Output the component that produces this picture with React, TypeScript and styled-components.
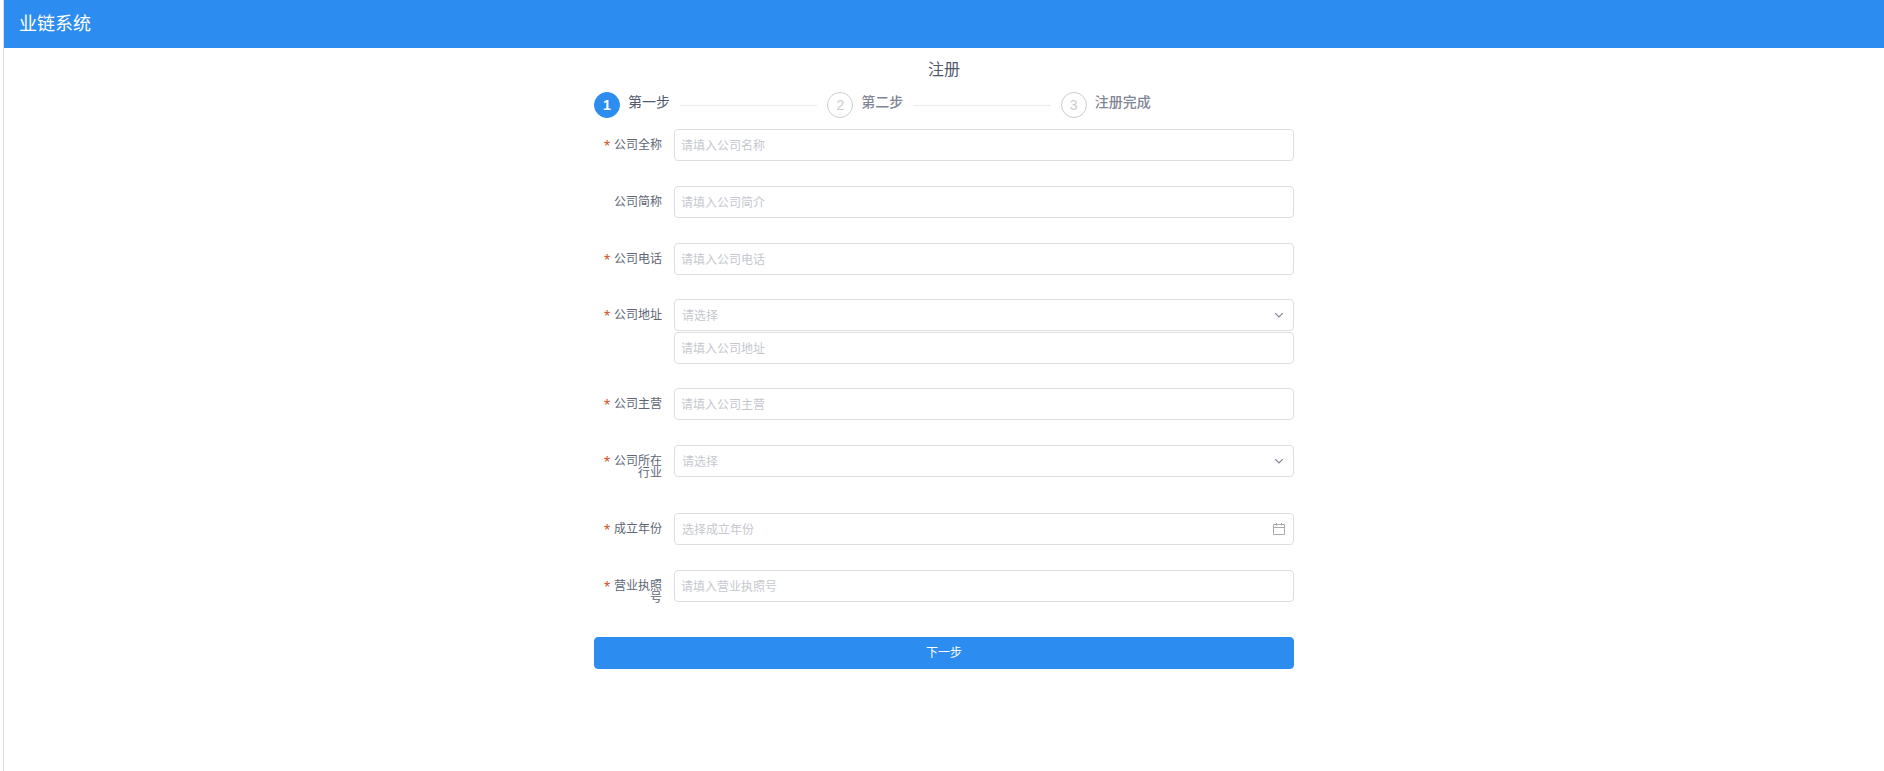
import React from "react";
import styled, { createGlobalStyle } from "styled-components";

const Global = createGlobalStyle`
  html, body { margin: 0; padding: 0; background: #fff; }
  body { font-family: "Noto Sans CJK SC", "Liberation Sans", sans-serif; color: #515a6e; font-size: 12px; }
  * { box-sizing: border-box; }
`;

const Page = styled.div`
  margin-left: 3px;
  border-left: 1px solid #dcdee2;
  height: 771px;
  overflow: hidden;
`;

const Header = styled.header`
  height: 48px;
  background: #2d8cf0;
  color: #fff;
  font-size: 18px;
  line-height: 44px;
  padding-left: 15px;
`;

const Main = styled.main`
  width: 700px;
  margin: 0 0 0 590px;
`;

const Title = styled.h1`
  margin: 0;
  height: 44px;
  font-size: 16px;
  font-weight: 400;
  line-height: 40px;
  text-align: center;
  color: #515a6e;
`;

const Steps = styled.ol`
  display: flex;
  list-style: none;
  margin: 0 0 11px;
  padding: 0;
  height: 26px;
`;

const Step = styled.li`
  flex: 1;
  display: flex;
  align-items: center;
  min-width: 0;
`;

const Circle = styled.span<{ $active?: boolean }>`
  flex: none;
  width: 26px;
  height: 26px;
  border-radius: 50%;
  border: 1px solid ${(p) => (p.$active ? "#2d8cf0" : "#ccc")};
  background: ${(p) => (p.$active ? "#2d8cf0" : "#fff")};
  color: ${(p) => (p.$active ? "#fff" : "#ccc")};
  font-family: "Liberation Sans", sans-serif;
  font-size: 14px;
  font-weight: ${(p) => (p.$active ? 700 : 400)};
  line-height: 25px;
  text-align: center;
`;

const StepLabel = styled.span<{ $active?: boolean }>`
  flex: none;
  margin: -8px 0 0 8px;
  font-size: 14px;
  line-height: 20px;
  font-weight: ${(p) => (p.$active ? 400 : 500)};
  color: ${(p) => (p.$active ? "#515a6e" : "#808695")};
`;

const StepLine = styled.span`
  flex: 1;
  height: 1px;
  margin: 0 10px;
  background: #e8eaec;
`;

const Row = styled.div<{ $after?: number }>`
  display: grid;
  grid-template-columns: 80px 1fr;
  margin-bottom: ${(p) => p.$after ?? 25}px;
`;

const Label = styled.label`
  display: block;
  height: 32px;
  padding: 9px 12px 0 0;
  line-height: 12px;
  font-size: 12px;
  text-align: right;
  color: #5e6675;
  position: relative;
`;

const LabelText = styled.span`
  display: block;
  width: 48px;
  margin-left: auto;
`;

const Star = styled.span`
  position: absolute;
  left: 10px;
  top: 12px;
  color: #d4532b;
  font-family: "Liberation Sans", sans-serif;
  font-size: 16px;
  line-height: 12px;
`;

const Fields = styled.div`
  display: flex;
  flex-direction: column;
  gap: 1px;
  min-width: 0;
`;

const Field = styled.div`
  position: relative;
  display: flex;
  align-items: center;
  justify-content: space-between;
  width: 100%;
  height: 32px;
  padding: 0 7px;
  background: #fff;
  border: 1px solid #dcdee2;
  border-radius: 4px;
  font-size: 12px;
  color: #c5c8ce;
`;

const TextInput = styled.input`
  display: block;
  width: 100%;
  height: 32px;
  padding: 0 6px 2px;
  background: #fff;
  border: 1px solid #dcdee2;
  border-radius: 4px;
  outline: none;
  font-family: inherit;
  font-size: 12px;
  color: #515a6e;
  &::placeholder { color: #c5c8ce; opacity: 1; }
`;

const Placeholder = styled.span`
  line-height: 30px;
  margin-top: -1px;
`;

const Submit = styled.button`
  display: block;
  width: 100%;
  height: 32px;
  margin: 0;
  padding: 0 0 3px;
  border: 1px solid #2d8cf0;
  border-radius: 4px;
  background: #2d8cf0;
  color: #fff;
  font-family: inherit;
  font-size: 12px;
`;

const Chevron = () => (
  <svg width="12" height="12" viewBox="0 0 12 12" fill="none" stroke="#808695" strokeWidth="1.2" style={{ flex: "none", marginRight: 1, marginTop: -1 }}>
    <path d="M2.2 4.2 6 8l3.8-3.8" />
  </svg>
);

const Calendar = () => (
  <svg width="14" height="14" viewBox="0 0 14 14" fill="none" stroke="#aaa" strokeWidth="1">
    <path d="M1.5 2.5h11v10h-11zM1.5 5.5h11M4.5 1v2.5M9.5 1v2.5" />
  </svg>
);

function InputRow({ label, placeholder, required = true, after }: { label: string; placeholder: string; required?: boolean; after?: number }) {
  return (
    <Row $after={after}>
      <Label>
        {required && <Star>*</Star>}
        <LabelText>{label}</LabelText>
      </Label>
      <TextInput placeholder={placeholder} />
    </Row>
  );
}

export default function App() {
  return (
    <Page>
      <Global />
      <Header>业链系统</Header>
      <Main>
        <Title>注册</Title>
        <Steps>
          <Step>
            <Circle $active>1</Circle>
            <StepLabel $active>第一步</StepLabel>
            <StepLine />
          </Step>
          <Step>
            <Circle>2</Circle>
            <StepLabel>第二步</StepLabel>
            <StepLine />
          </Step>
          <Step>
            <Circle>3</Circle>
            <StepLabel>注册完成</StepLabel>
          </Step>
        </Steps>
        <InputRow label="公司全称" placeholder="请填入公司名称" />
        <InputRow label="公司简称" placeholder="请填入公司简介" required={false} />
        <InputRow label="公司电话" placeholder="请填入公司电话" after={24} />
        <Row $after={24}>
          <Label>
            <Star>*</Star>
            <LabelText>公司地址</LabelText>
          </Label>
          <Fields>
            <Field>
              <Placeholder>请选择</Placeholder>
              <Chevron />
            </Field>
            <TextInput placeholder="请填入公司地址" />
          </Fields>
        </Row>
        <InputRow label="公司主营" placeholder="请填入公司主营" />
        <Row $after={36}>
          <Label>
            <Star>*</Star>
            <LabelText>公司所在行业</LabelText>
          </Label>
          <Field>
            <Placeholder>请选择</Placeholder>
            <Chevron />
          </Field>
        </Row>
        <Row>
          <Label>
            <Star>*</Star>
            <LabelText>成立年份</LabelText>
          </Label>
          <Field>
            <Placeholder>选择成立年份</Placeholder>
            <Calendar />
          </Field>
        </Row>
        <InputRow label="营业执照号" placeholder="请填入营业执照号" after={35} />
        <Submit type="button">下一步</Submit>
      </Main>
    </Page>
  );
}
